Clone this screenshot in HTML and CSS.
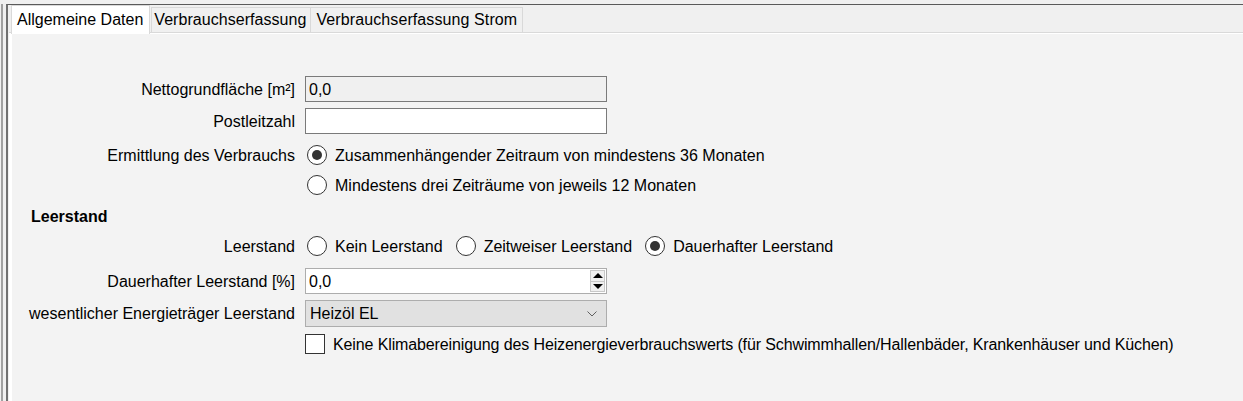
FILE: index.html
```html
<!DOCTYPE html>
<html lang="de">
<head>
<meta charset="utf-8">
<title>Allgemeine Daten</title>
<link rel="stylesheet" href="styles.css">
</head>
<body>
<div class="app">
  <div class="window">
    <div class="tabstrip">
      <div class="tab active">Allgemeine Daten</div>
      <div class="tab">Verbrauchserfassung</div>
      <div class="tab last">Verbrauchserfassung Strom</div>
    </div>
    <div class="pane">
      <div class="form">
        <div class="label">Nettogrundfläche [m²]</div>
        <div class="field"><div class="input disabled">0,0</div></div>

        <div class="label">Postleitzahl</div>
        <div class="field"><div class="input"></div></div>

        <div class="label">Ermittlung des Verbrauchs</div>
        <div class="field"><div class="radios"><span class="radio on"></span><span class="rtext">Zusammenhängender Zeitraum von mindestens 36 Monaten</span></div></div>

        <div class="label"></div>
        <div class="field"><div class="radios"><span class="radio"></span><span class="rtext">Mindestens drei Zeiträume von jeweils 12 Monaten</span></div></div>

        <div class="heading">Leerstand</div>

        <div class="label">Leerstand</div>
        <div class="field">
          <div class="radios">
            <span class="radio"></span><span class="rtext">Kein Leerstand</span>
            <span class="radio"></span><span class="rtext">Zeitweiser Leerstand</span>
            <span class="radio on"></span><span class="rtext">Dauerhafter Leerstand</span>
          </div>
        </div>

        <div class="label">Dauerhafter Leerstand [%]</div>
        <div class="field">
          <div class="spinner">
            <span class="spintext">0,0</span>
            <span class="spinbtns">
              <span class="spinbtn"><span class="tri up"></span></span>
              <span class="spinbtn"><span class="tri down"></span></span>
            </span>
          </div>
        </div>

        <div class="label">wesentlicher Energieträger Leerstand</div>
        <div class="field">
          <div class="combo">
            <span class="combotext">Heizöl EL</span>
            <svg class="chev" width="10" height="6" viewBox="0 0 10 6"><path d="M0.5 0.5 L5 5 L9.5 0.5" fill="none" stroke="#606060" stroke-width="1"/></svg>
          </div>
        </div>

        <div class="label"></div>
        <div class="field checkrow"><span class="check"></span><span class="ctext">Keine Klimabereinigung des Heizenergieverbrauchswerts (für Schwimmhallen/Hallenbäder, Krankenhäuser und Küchen)</span></div>
      </div>
    </div>
  </div>
</div>
</body>
</html>
```
FILE: styles.css
```css
html, body {
  margin: 0;
  height: 100%;
}
body {
  background: #f0f0f0;
  font-family: "Liberation Sans", Arial, sans-serif;
  font-size: 16px;
  color: #000;
  overflow: hidden;
}
.app {
  height: 100%;
  margin-left: 1px;
  border-left: 2px solid #a0a0a0;
  padding-left: 3px;
  box-sizing: border-box;
}
.window {
  height: calc(100% - 4px);
  margin-top: 4px;
  border-top: 1px solid #5a5a5a;
  border-left: 2px solid #707070;
  padding-left: 1px;
  display: flex;
  flex-direction: column;
  box-sizing: border-box;
}
.tabstrip {
  height: 27px;
  flex: none;
  display: flex;
  align-items: flex-end;
  padding-left: 2px;
  position: relative;
  z-index: 1;
}
.tab {
  height: 25px;
  box-sizing: border-box;
  border: 1px solid #d9d9d9;
  border-bottom: none;
  background: #f0f0f0;
  display: flex;
  align-items: center;
  padding: 0 4px 0 2px;
  white-space: nowrap;
  letter-spacing: 0.05px;
}
.tab.active {
  height: 29px;
  margin-bottom: -2px;
  background: #fff;
  padding: 0 6px 0 5px;
  margin-right: 1px;
  letter-spacing: 0;
}
.tab.last {
  padding: 0 5px 0 5px;
  letter-spacing: 0.1px;
}
.tab + .tab {
  margin-left: -1px;
}
.tab.active + .tab {
  margin-left: 0;
}
.pane {
  flex: 1;
  border-top: 1px solid #d9d9d9;
}
.form {
  height: 100%;
  box-sizing: border-box;
  border-top: 1px solid #fff;
  border-left: 3px solid #fff;
  background: #f3f3f3;
  padding: 42px 0 0 19px;
  display: grid;
  grid-template-columns: 264px 1fr;
  column-gap: 10px;
  grid-template-rows: 32px 34px 30px 31px 30px 35px 32px 34px 20px;
  align-items: start;
}
.label {
  height: 26px;
  padding-top: 1px;
  box-sizing: border-box;
  display: flex;
  align-items: center;
  justify-content: flex-end;
  white-space: nowrap;
}
.field {
  height: 26px;
  display: flex;
  align-items: center;
}
.heading {
  grid-column: 1 / 3;
  height: 26px;
  padding-top: 1px;
  box-sizing: border-box;
  display: flex;
  align-items: center;
  font-weight: bold;
}
.input {
  width: 302px;
  height: 26px;
  box-sizing: border-box;
  border: 1px solid #7a7a7a;
  background: #fff;
  padding: 1px 0 0 3px;
  display: flex;
  align-items: center;
}
.input.disabled {
  background: #f0f0f0;
}
.radios {
  display: flex;
  align-items: center;
  padding-left: 2px;
  white-space: nowrap;
}
.radio {
  width: 20px;
  height: 20px;
  box-sizing: border-box;
  border: 1px solid #333;
  border-radius: 50%;
  background: #fff;
  display: flex;
  align-items: center;
  justify-content: center;
  flex: none;
}
.radio.on::after {
  content: "";
  width: 10px;
  height: 10px;
  border-radius: 50%;
  background: #333;
}
.rtext {
  margin-left: 8px;
  margin-right: 13px;
  padding-top: 1px;
}
.spinner {
  width: 302px;
  height: 26px;
  box-sizing: border-box;
  border: 1px solid #adadad;
  background: #fff;
  display: flex;
  align-items: stretch;
}
.spintext {
  flex: 1;
  padding: 1px 0 0 3px;
  display: flex;
  align-items: center;
}
.spinbtns {
  width: 15px;
  margin: 1px 1px 1px 0;
  display: flex;
  flex-direction: column;
}
.spinbtn {
  flex: 1;
  border: 1px solid #c8c8c8;
  background: #f0f0f0;
  display: flex;
  align-items: center;
  justify-content: center;
}
.spinbtn + .spinbtn {
  border-top: none;
}
.tri {
  width: 0;
  height: 0;
  border-left: 5px solid transparent;
  border-right: 5px solid transparent;
}
.tri.up {
  border-bottom: 5px solid #000;
}
.tri.down {
  border-top: 5px solid #000;
}
.combo {
  width: 302px;
  height: 27px;
  box-sizing: border-box;
  border: 1px solid #adadad;
  background: #e1e1e1;
  display: flex;
  align-items: center;
  justify-content: space-between;
  padding: 1px 9px 0 4px;
}
.chev {
  display: block;
}
.checkrow {
  height: 20px;
}
.check {
  width: 20px;
  height: 20px;
  box-sizing: border-box;
  border: 1px solid #333;
  background: #fff;
  flex: none;
}
.ctext {
  margin-left: 8px;
  padding-top: 1px;
  white-space: nowrap;
  letter-spacing: -0.12px;
}
```
